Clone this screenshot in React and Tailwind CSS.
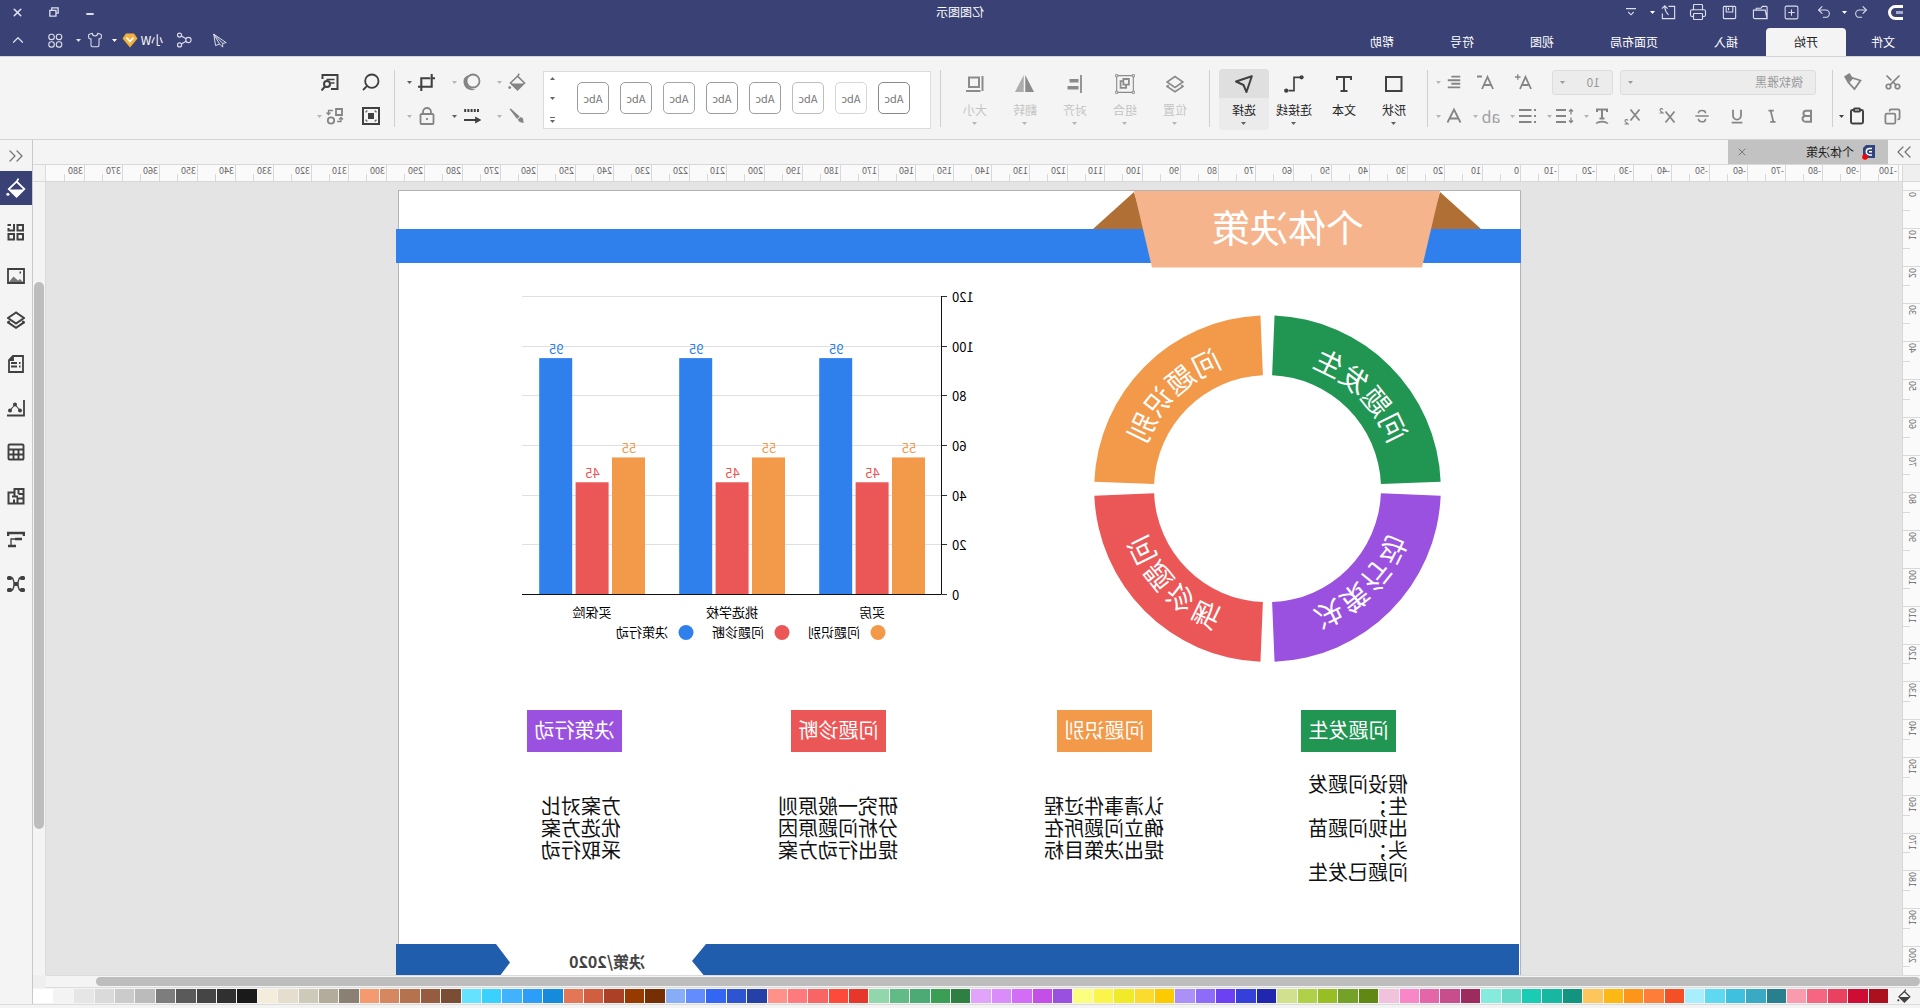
import React from 'react';
import {
  Undo2,
  Redo2,
  SquarePlus,
  Printer,
  Scissors,
  Copy,
  Clipboard,
  Search,
  ChevronUp,
  ChevronsLeft,
  ChevronsRight,
  Shirt,
  X,
  Minus,
} from 'lucide-react';

// canvas pixels per millimetre at 100%
const MM = 3.7795;

const tabs = ['开始', '插入', '页面布局', '视图', '符号', '帮助'];

const palette = [
  '#ac0f1e', '#cd0d33', '#e94260', '#f66681', '#f89cad',
  '#28808f', '#39a9c4', '#3fc0de', '#5fd9f1', '#a8eefe',
  '#f55025', '#fe7d38', '#fd9519', '#feb814', '#fdc65c',
  '#13947f', '#17b7a0', '#19ccb3', '#65dac8', '#84ebdd',
  '#9c2b5e', '#c84d8c', '#e566a8', '#f986c7', '#f1c2dc',
  '#608813', '#76a129', '#98be25', '#b1d04a', '#d1e08d',
  '#1f27af', '#353fda', '#6c40f3', '#8e6bf9', '#ab91f7',
  '#fbca01', '#fbdc2e', '#f1ea29', '#fbf44b', '#fcfe80',
  '#994fe0', '#c34fe8', '#d36df7', '#d98cfa', '#e0a5fb',
  '#2f7f43', '#3a9f54', '#4eaa74', '#62bb86', '#92d7ab',
  '#e7362a', '#fe4a39', '#f96464', '#fe7a7c', '#fe9188',
  '#2541a8', '#2d55d2', '#3367f3', '#638cfe', '#87adf6',
  '#762f02', '#983a00', '#ac4025', '#d15e40', '#e37654',
  '#178bdb', '#2c9df8', '#42b1fe', '#3bd1fe', '#65e3fe',
  '#7a4e35', '#955c42', '#b4724f', '#d58760', '#f5996e',
  '#8a8074', '#b3ab9b', '#cecab9', '#e5decf', '#f4eddc',
  '#1a1a1a', '#303030', '#454545', '#5a5a5a', '#7d7d7d',
  '#bbbbbb', '#cbcbcb', '#dadada', '#e6e6e6', '#f3f3f3', '#ffffff',
];

function Svg({ size = 18, sw = 1.8, children }) {
  return (
    <svg
      width={size}
      height={size}
      viewBox="0 0 18 18"
      fill="none"
      stroke="currentColor"
      strokeWidth={sw}
      className="shrink-0"
      aria-hidden="true"
    >
      {children}
    </svg>
  );
}

function Caret({ className = '' }) {
  return (
    <svg width="5" height="3" viewBox="0 0 5 3" className={`shrink-0 ${className}`} aria-hidden="true">
      <path d="M0 0h5L2.5 3z" fill="currentColor" />
    </svg>
  );
}

const Bucket = ({ size }) => (
  <Svg size={size} sw={1.6}>
    <path d="M8.5 3.2 15.5 10l-7 6.8-7-6.8zM8.5 3.6 6.8.6" />
    <path d="M2 10.4h13l-6.5 6z" fill="currentColor" stroke="none" />
    <circle cx="16.3" cy="14.6" r="1.4" fill="currentColor" stroke="none" />
  </Svg>
);

const Layers = ({ sw }) => (
  <Svg sw={sw}>
    <path d="M9 1.5 17 7l-8 5.5L1 7z" />
    <path d="m2.8 10.2-1.8 1.2 8 5.4 8-5.4-1.8-1.2" />
  </Svg>
);

/* ---------- title bar ---------- */

function BarButton({ label, wide = 'w-[31px]', children }) {
  return (
    <button aria-label={label} className={`${wide} h-6 flex items-center justify-center text-[#dcdeec]`}>
      {children}
    </button>
  );
}

function TitleBar() {
  return (
    <header className="bg-[#3a4174] text-white">
      <div className="h-7 grid grid-cols-[1fr_auto_1fr] items-start">
        <div className="flex items-center h-6">
          <svg width="17" height="17" viewBox="0 0 17 17" className="ml-4 mr-3" aria-hidden="true">
            <path d="M1 2.5h7.5a6 6 0 0 1 0 12H1" fill="none" stroke="#fff" strokeWidth="3" />
            <path d="M1 8.5h7" stroke="#a7abc9" strokeWidth="3" />
          </svg>
          <BarButton label="撤销" wide="w-7"><Undo2 size={16} strokeWidth={1.6} /></BarButton>
          <Caret />
          <BarButton label="恢复" wide="w-[35px]"><Redo2 size={16} strokeWidth={1.6} /></BarButton>
          <BarButton label="新建"><SquarePlus size={17} strokeWidth={1.5} /></BarButton>
          <BarButton label="打开">
            <Svg size={17} sw={1.2}>
              <path d="M2 15.5V3.5a1 1 0 0 1 1-1h4l1.5 2h5v2M2 15.5l2-9h12.5V14a1.5 1.5 0 0 1-1.5 1.5z" />
            </Svg>
          </BarButton>
          <BarButton label="保存">
            <Svg size={17} sw={1.2}>
              <rect x="2.5" y="2.5" width="13" height="13" rx="1" />
              <path d="M5.5 2.5v6h7v-6M10 4v2.5" />
            </Svg>
          </BarButton>
          <BarButton label="打印"><Printer size={18} strokeWidth={1.5} /></BarButton>
          <BarButton label="导出" wide="w-7">
            <Svg size={17} sw={1.2}>
              <path d="M9 2.5H2.5v13h13V10" />
              <path d="M9 11.5c2-2 4-5 4-9M10 5l3-3 3 3" />
            </Svg>
          </BarButton>
          <Caret />
          <BarButton label="更多" wide="w-[38px]">
            <Svg size={10} sw={2}>
              <path d="M0 3h18M4 9l5 5 5-5" />
            </Svg>
          </BarButton>
        </div>
        <h1 className="h-6 leading-6 text-xs">亿图图示</h1>
        <div className="flex justify-end h-6">
          <BarButton label="最小化" wide="w-9"><Minus size={10} strokeWidth={5} className="mt-1" /></BarButton>
          <BarButton label="还原" wide="w-9">
            <Svg size={10} sw={2.4}>
              <path d="M5 11H1.5V1.5H13V5M5.5 6h11v10.5h-11z" />
            </Svg>
          </BarButton>
          <BarButton label="关闭" wide="w-9"><X size={13} strokeWidth={3} /></BarButton>
        </div>
      </div>
      <div className="h-7 flex justify-between items-start">
        <nav className="flex text-xs">
          <button className="w-[74px] h-7">文件</button>
          {tabs.map((tab) => (
            <button
              key={tab}
              className={`px-7 h-7 ${tab === '开始' ? 'bg-[#f4f4f4] text-[#222] rounded-t-sm' : ''}`}
            >
              {tab}
            </button>
          ))}
        </nav>
        <div className="flex items-center h-6">
          <BarButton label="发送" wide="w-9">
            <Svg size={16} sw={1.1}>
              <path d="M16 2.5 2 12l4 .8M16 2.5 6 12.8V17l3.5-3.5M16 2.5 9.5 13.5l4.5 1.8z" />
            </Svg>
          </BarButton>
          <BarButton label="分享" wide="w-9">
            <Svg size={16} sw={1.3}>
              <circle cx="4" cy="9" r="3" />
              <circle cx="14" cy="3.5" r="2.3" />
              <circle cx="14" cy="14.5" r="2.3" />
              <path d="M6.7 7.6 12 4.6M6.7 10.4l5.3 3" />
            </Svg>
          </BarButton>
          <button className="flex items-center text-xs ml-0.5">
            <span className="w-6">小W</span>
            <svg width="16" height="15" viewBox="0 0 16 15" className="ml-0.5 mr-[5px]" aria-hidden="true">
              <path d="M4 .5h8l3.5 5L8 14.5.5 5.5z" fill="#f3b13f" />
              <path d="M4.5 4.5 8 8.5l3.5-4" fill="none" stroke="#fff" strokeWidth="1.8" />
            </svg>
            <Caret />
          </button>
          <button aria-label="皮肤" className="flex items-center ml-[9px] gap-1.5 text-[#dcdeec]">
            <Shirt size={16} strokeWidth={1.6} />
            <Caret />
          </button>
          <BarButton label="应用" wide="w-10">
            <Svg size={15} sw={1.4}>
              <rect x="1.5" y="1.5" width="6.5" height="6.5" rx="2.8" />
              <rect x="10.5" y="1.5" width="6.5" height="6.5" rx="2.8" />
              <rect x="1.5" y="10.5" width="6.5" height="6.5" rx="2.8" />
              <rect x="10.5" y="10.5" width="6.5" height="6.5" rx="2.8" />
            </Svg>
          </BarButton>
          <BarButton label="收起功能区" wide="w-9"><ChevronUp size={18} strokeWidth={1.6} /></BarButton>
        </div>
      </div>
    </header>
  );
}

/* ---------- ribbon ---------- */

function Tool({ label, width = 'w-[35px]', dark, children }) {
  return (
    <button
      aria-label={label}
      className={`${width} h-[34px] flex items-center justify-center ${dark ? 'text-[#404040]' : 'text-[#858585]'}`}
    >
      {children}
    </button>
  );
}

function DropTool({ label, width = 'w-[37px]', gap = 'gap-1', dark, children }) {
  return (
    <button
      aria-label={label}
      className={`${width} ${gap} h-[34px] flex items-center pl-1 ${dark ? 'text-[#404040]' : 'text-[#858585]'}`}
    >
      <span className="w-[18px] flex justify-center">{children}</span>
      <Caret className={dark ? 'text-[#606060]' : 'text-[#b5b5b5]'} />
    </button>
  );
}

function BigTool({ label, disabled, active, caret = true, children }) {
  return (
    <button
      disabled={disabled}
      className={`w-[50px] h-[61px] flex flex-col items-center rounded-sm ${active ? 'bg-[#ebebeb]' : ''} ${
        disabled ? 'text-[#8b8b8b]' : 'text-[#404040]'
      }`}
    >
      <span className={`h-[29px] w-full flex items-center justify-center rounded-t-sm ${active ? 'bg-[#dfdfdf]' : ''}`}>
        {children}
      </span>
      <span className={`h-6 leading-6 text-xs ${disabled ? 'text-[#c4c4c4]' : 'text-[#222]'}`}>{label}</span>
      {caret && <Caret className={disabled ? 'text-[#b5b5b5]' : 'text-[#606060]'} />}
    </button>
  );
}

const Divider = ({ className = '' }) => <div className={`w-px h-[57px] mt-[5px] bg-[#cfcfcf] ${className}`} />;

const styleBorders = [
  'border-[#8a8a8a]', 'border-[#d6d6d6]', 'border-[#bdbdbd]', 'border-[#9c9c9c]',
  'border-[#9c9c9c]', 'border-[#a6a6a6]', 'border-[#9c9c9c]', 'border-[#9c9c9c]',
];

function Ribbon() {
  return (
    <div className="h-[84px] flex items-start bg-[#f4f4f4] border-y border-[#d2d2d6] pt-2">
      <div className="pl-[7px]">
        <div className="flex">
          <Tool label="剪切" width="w-10"><Scissors size={18} strokeWidth={2.3} className="-rotate-90" /></Tool>
          <Tool label="格式刷" width="w-10">
            <Svg>
              <path d="M1.5 7.500 9.500 5l4 4.500L7.500 16z" />
              <path d="M9.500 4.500 12.500 0 18 3.500 14.500 9.500z" fill="currentColor" stroke="none" />
            </Svg>
          </Tool>
        </div>
        <div className="flex">
          <Tool label="复制" width="w-10"><Copy size={17} strokeWidth={2.5} /></Tool>
          <Tool label="粘贴" width="w-10" dark>
            <Clipboard size={18} strokeWidth={2.6} className="mr-1" />
            <Caret />
          </Tool>
        </div>
      </div>
      <Divider />
      <div className="pl-[7px]">
        <div className="flex items-center pl-[9px]">
          <label className="relative w-[196px] text-[#9a9a9a] mr-[7px]">
            <select
              aria-label="字体"
              className="appearance-none block w-full h-[25px] pl-3 text-xs bg-[#ececec] border border-[#dcdcdf] rounded-[3px]"
            >
              <option>微软雅黑</option>
            </select>
            <Caret className="absolute right-2 top-[11px] pointer-events-none" />
          </label>
          <label className="relative w-[61px] text-[#9a9a9a] mr-2.5">
            <select
              aria-label="字号"
              className="appearance-none block w-full h-[25px] pl-3 text-xs bg-[#ececec] border border-[#dcdcdf] rounded-[3px]"
            >
              <option>10</option>
            </select>
            <Caret className="absolute right-2 top-[11px] pointer-events-none" />
          </label>
          <Tool label="增大字号" width="w-9">
            <Svg>
              <path d="M2 16 7.500 4 13 16M4 12h7" />
              <path d="M12.500 4H18M15.200 1.200v5.600" strokeWidth="1.300" />
            </Svg>
          </Tool>
          <Tool label="减小字号" width="w-[39px]">
            <Svg>
              <path d="M2 16 7.500 4 13 16M4 12h7M13 3.500h5" />
            </Svg>
          </Tool>
          <DropTool label="对齐方式">
            <Svg size={16} sw={2.1}>
              <path d="M2 3h10M2 7h14M2 11h10M2 15h14" />
            </Svg>
          </DropTool>
        </div>
        <div className="flex">
          <Tool label="加粗">
            <Svg size={16} sw={2.2}>
              <path d="M4.500 3H10a3 3 0 0 1 0 6H4.500zM4.500 9h6.300a3.200 3.200 0 0 1 0 6.400H4.500z" />
            </Svg>
          </Tool>
          <Tool label="斜体">
            <Svg size={16} sw={2}>
              <path d="M7 3h6M5 15.500h6M10.500 3l-3 12.500" />
            </Svg>
          </Tool>
          <Tool label="下划线">
            <Svg size={16} sw={2}>
              <path d="M4.500 2v6.500a4.500 4.500 0 0 0 9 0V2M3 16.500h12" />
            </Svg>
          </Tool>
          <Tool label="删除线">
            <Svg size={16}>
              <path d="M13 6c0-2-1.500-3.200-4-3.200S5 3.900 5 5.800M1.500 9h15M5 12c0 2.200 1.500 3.500 4 3.500s4-1.300 4-3.300" />
            </Svg>
          </Tool>
          <Tool label="上标">
            <Svg>
              <path d="m1.500 4.500 9 11M10.500 4.500l-9 11" />
              <path d="M13 2.500c1-1.500 3.300-1 3 .6-.2 1.100-2 1.900-3 2.900h3.500" strokeWidth="1.100" />
            </Svg>
          </Tool>
          <Tool label="下标">
            <Svg>
              <path d="m1.500 2.500 9 11M10.500 2.500l-9 11" />
              <path d="M13 13.500c1-1.500 3.300-1 3 .6-.2 1.100-2 1.900-3 2.900h3.500" strokeWidth="1.100" />
            </Svg>
          </Tool>
          <DropTool label="文字方向">
            <Svg sw={2}>
              <path d="M4 5V2.500h10V5M9 2.500v9M6.500 11.500h5" />
              <path d="M3 16.500c3-2.500 9-2.500 12 0" strokeWidth="1.600" />
            </Svg>
          </DropTool>
          <DropTool label="行距">
            <Svg sw={2}>
              <path d="M8 3h10M8 9h10M8 15h10" />
              <path d="M3 2.500v5M1 4.500l2-2 2 2M3 10.500v5M1 13.500l2 2 2-2" strokeWidth="1.300" />
            </Svg>
          </DropTool>
          <DropTool label="项目符号">
            <Svg sw={2}>
              <path d="M5.500 3H18M5.500 9H18M5.500 15H18M1 3h2M1 9h2M1 15h2" />
            </Svg>
          </DropTool>
          <DropTool label="文字底色"><span className="text-base leading-5 text-[#a0a0a0]">ab</span></DropTool>
          <DropTool label="文字颜色">
            <Svg>
              <path d="M2.500 15.500 9 2.500l6.500 13M5 11.500h8" />
            </Svg>
          </DropTool>
        </div>
      </div>
      <Divider className="ml-0.5 mr-2" />
      <div className="flex pt-1">
        <BigTool label="形状">
          <Svg><rect x="1.500" y="2" width="15.500" height="14" strokeWidth="2" /></Svg>
        </BigTool>
        <BigTool label="文本" caret={false}>
          <Svg sw={2}><path d="M2 5V2h14v3M9 2v14.500M5.500 16h7" /></Svg>
        </BigTool>
        <BigTool label="连接线">
          <Svg size={20} sw={1.5}>
            <path d="M2 3h7v12h5" />
            <circle cx="2.200" cy="3" r="1.900" fill="currentColor" stroke="none" />
            <circle cx="16" cy="15" r="1.900" fill="currentColor" stroke="none" />
          </Svg>
        </BigTool>
        <BigTool label="选择" active>
          <Svg sw={2}><path d="M1.200 1.200 17 6.500 9.500 10 6.500 17z" strokeLinejoin="round" /></Svg>
        </BigTool>
      </div>
      <Divider className="mx-[9px]" />
      <div className="flex pt-1">
        <BigTool label="位置" disabled><Layers sw={1.7} /></BigTool>
        <BigTool label="组合" disabled>
          <Svg size={20} sw={1}>
            <path d="M1.500 1.500h15v15h-15z" />
            <path d="M5.500 4.500h5v5h-5zM8 9.500v3h5v-6h-2.500" strokeWidth="1.600" />
            <path d="M.5.5h2v2h-2zM15.500.5h2v2h-2zM.5 15.500h2v2h-2zM15.500 15.500h2v2h-2z" fill="#f4f4f4" strokeWidth=".8" />
          </Svg>
        </BigTool>
        <BigTool label="对齐" disabled>
          <Svg>
            <path d="M3 0v18" />
            <path d="M5.500 4h9v3.500h-9zM5.500 11h11v3.500h-11z" fill="currentColor" stroke="none" />
          </Svg>
        </BigTool>
        <BigTool label="翻转" disabled>
          <Svg size={19}>
            <path d="M8.300 1v16H0z" fill="#8b8b8b" stroke="none" />
            <path d="M9.700 1v16H18z" fill="#adadad" stroke="none" />
          </Svg>
        </BigTool>
        <BigTool label="大小" disabled>
          <Svg sw={2}><path d="M5 2.500h10V12H5zM1.500 1v15M3.500 16H18" /></Svg>
        </BigTool>
      </div>
      <Divider className="mx-[9px]" />
      <div className="mt-1.5 h-[58px] w-[388px] flex items-center justify-between bg-white border border-[#dcdcdc] pl-5 pr-1.5">
        <div className="flex gap-[11px] pb-1">
          {styleBorders.map((border, i) => (
            <button key={i} className={`size-8 rounded-[5px] border text-[11px] text-[#777] bg-white ${border}`}>
              Abc
            </button>
          ))}
        </div>
        <div className="flex flex-col items-center gap-[17px] text-[#666]">
          <button aria-label="上一行"><Caret className="rotate-180 block" /></button>
          <button aria-label="下一行"><Caret className="block" /></button>
          <button aria-label="更多样式" className="border-t border-[#666] pt-0.5"><Caret className="block" /></button>
        </div>
      </div>
      <div className="ml-[13px]">
        <div className="flex">
          <DropTool label="填充" width="w-[45px]" gap="gap-1.5"><Bucket size={18} /></DropTool>
          <DropTool label="阴影" width="w-[45px]" gap="gap-1.5">
            <Svg>
              <circle cx="8" cy="8" r="6.500" />
              <path d="M12 2.500a8 8 0 0 1-7 13.500c4.500 3 12.500 0 12.500-7.500 0-3.500-2.500-6-5.500-6z" fill="currentColor" stroke="none" />
            </Svg>
          </DropTool>
          <DropTool label="裁剪" width="w-[45px]" gap="gap-1.5" dark>
            <Svg size={17} sw={2.2}><path d="M3.500 0v13.500H15M14.500 18V4.500H5M0 4.500h3M15 13.500h3" /></Svg>
          </DropTool>
        </div>
        <div className="flex">
          <DropTool label="线条" width="w-[45px]" gap="gap-1.5">
            <Svg size={16}>
              <path d="M17.500 1 16 .5 6 9.500 9 12.500z" fill="currentColor" stroke="none" />
              <path d="M5.500 10.500 8 13c-1 3-4 4-7 3.500 1.200-1 .8-2 1-3.500.3-1.800 1.600-2.800 3.500-2.500z" fill="currentColor" stroke="none" />
            </Svg>
          </DropTool>
          <DropTool label="线型" width="w-[45px]" gap="gap-1.5" dark>
            <Svg>
              <path d="M2 3.500h15" strokeWidth="3" strokeDasharray="2 1.200" />
              <path d="M17 13H2M5 11l-3.500 2L5 15z" fill="currentColor" />
            </Svg>
          </DropTool>
          <DropTool label="锁定" width="w-[45px]" gap="gap-1.5">
            <Svg>
              <rect x="2.500" y="7" width="13" height="10" rx="1" />
              <path d="M5 7V5a4 4 0 0 1 8 0v2M9 11v2" />
            </Svg>
          </DropTool>
        </div>
      </div>
      <Divider />
      <div>
        <div className="flex">
          <Tool label="查找" width="w-[46px]" dark><Search size={20} strokeWidth={2.2} /></Tool>
          <Tool label="查找替换" width="w-9" dark>
            <Svg sw={2}>
              <path d="M8 16H1.500V2h15v4" />
              <path d="M4.500 6.500h8M4.500 10H8" strokeWidth="1.500" />
              <circle cx="12" cy="11" r="3" />
              <path d="m14 13.500 3.500 4" />
            </Svg>
          </Tool>
        </div>
        <div className="flex">
          <Tool label="适应页面" width="w-[46px]" dark>
            <Svg sw={2}>
              <rect x="1" y="1" width="16" height="16" />
              <path d="M6 6h6v6H6z" fill="currentColor" stroke="none" />
              <path d="M4 5.500V4h1.500M12.500 4H14v1.500M4 12.500V14h1.500M12.500 14H14v-1.500" strokeWidth="1" />
            </Svg>
          </Tool>
          <DropTool label="替换形状" width="w-9">
            <Svg>
              <path d="M2 2h6v6H2z" />
              <circle cx="13" cy="13.500" r="3.200" />
              <path d="M11 3.500h4.500V7M13.500 5.500l2 2 2-2M7 14.500H3V11M1 12.500l2-2 2 2" strokeWidth="1.300" />
            </Svg>
          </DropTool>
        </div>
      </div>
    </div>
  );
}

/* ---------- rulers ---------- */

const hMarks = Array.from({ length: 49 }, (_, i) => i * 10 - 100);
const vMarks = Array.from({ length: 21 }, (_, i) => i * 10);
const span = (i) => Math.round((i + 1) * 10 * MM) - Math.round(i * 10 * MM);

function HorizontalRuler() {
  return (
    <div className="flex-1 min-w-0 flex overflow-hidden bg-[#fafafa] border-l border-[#d8d8d8] pl-[3px] text-[9px] leading-3 text-[#666]">
      {hMarks.map((mark, i) => (
        <div key={mark} className="flex shrink-0 border-l border-[#d8d8d8]" style={{ width: span(i) }}>
          <span className="w-1/2 pl-px">{mark}</span>
          <span className="w-1/2 h-[7px] self-end border-l border-[#d8d8d8]" />
        </div>
      ))}
    </div>
  );
}

function VerticalRuler() {
  return (
    <div className="w-[18px] shrink-0 overflow-hidden bg-[#fafafa] border-r border-[#d8d8d8] pt-2 text-[9px] leading-[9px] text-[#666]">
      {vMarks.map((mark, i) => (
        <div key={mark} className="flex flex-col border-t border-[#d8d8d8]" style={{ height: span(i) }}>
          <span className="h-1/2 pt-px pl-[3px]">
            <span className="block w-[9px] [writing-mode:vertical-rl] rotate-180">{mark}</span>
          </span>
          <span className="h-1/2 w-[7px] self-end border-t border-[#d8d8d8]" />
        </div>
      ))}
    </div>
  );
}

/* ---------- slide ---------- */

const segments = [
  { text: '问题发生', color: '#219653', angle: -45 },
  { text: '问题识别', color: '#f2994a', angle: 45 },
  { text: '问题诊断', color: '#eb5757', angle: 135 },
  { text: '决策行动', color: '#9b51e0', angle: 225 },
];

const polar = (r, deg) => {
  const a = (deg * Math.PI) / 180;
  return `${(r * Math.sin(a)).toFixed(2)} ${(-r * Math.cos(a)).toFixed(2)}`;
};

function Donut() {
  const R = 173.3;
  const r = 113.5;
  const half = 42.67;
  return (
    <g transform="translate(253.5 298.7)">
      {segments.map(({ text, color, angle }) => (
        <g key={text}>
          <path
            fill={color}
            d={`M${polar(R, angle - half)}A${R} ${R} 0 0 1 ${polar(R, angle + half)}L${polar(r, angle + half)}A${r} ${r} 0 0 0 ${polar(r, angle - half)}Z`}
          />
          {[...text].map((ch, i) => (
            <text
              key={i}
              y="-129"
              textAnchor="middle"
              className="text-[28px] fill-white"
              transform={`rotate(${angle + (i - 1.5) * 12.6})`}
            >
              {ch}
            </text>
          ))}
        </g>
      ))}
    </g>
  );
}

const series = [
  { name: '问题识别', color: '#f2994a', value: 55 },
  { name: '问题诊断', color: '#eb5757', value: 45 },
  { name: '决策行动', color: '#2f80ed', value: 95 },
];
const categories = ['买房', '挑选学校', '买保险'];

function BarChart() {
  const base = 404;
  const unit = 2.483;
  return (
    <g>
      {[0, 20, 40, 60, 80, 100, 120].map((v) => {
        const y = Math.round(base - v * unit) + 0.5;
        return (
          <g key={v}>
            {v > 0 && <path d={`M580 ${y}H999`} stroke="#e0e0e0" />}
            <path d={`M574 ${y}h5`} stroke="#333" />
            <text x="569" y={y + 5} textAnchor="end" className="text-[13px] fill-black">{v}</text>
          </g>
        );
      })}
      {categories.map((cat, g) => (
        <g key={cat}>
          {series.map(({ name, color, value }, i) => {
            const x = 596 + g * 140 + i * 36.4;
            return (
              <g key={name} fill={color}>
                <rect x={x} y={base - value * unit} width="33" height={value * unit} />
                <text x={x + 16} y={base - value * unit - 4} textAnchor="middle" className="text-[13px]">{value}</text>
              </g>
            );
          })}
          <text x={649 + g * 140} y="427" textAnchor="middle" className="text-[13px] fill-black">{cat}</text>
        </g>
      ))}
      <path d="M579.5 106V404.5H999" fill="none" stroke="#111" />
      {series.map(({ name, color }, i) => (
        <g key={name}>
          <circle cx={643 + i * 96} cy="442.5" r="7.5" fill={color} />
          <text x={661 + i * 96} y="447" className="text-[13px] fill-black">{name}</text>
        </g>
      ))}
    </g>
  );
}

const steps = [
  {
    title: '问题发生',
    text: '假设问题发\n生；\n出现问题苗\n头；\n问题已发生',
    box: 'left-[125px] bg-[#219653]',
    body: 'left-[113px] top-[583px]',
  },
  {
    title: '问题识别',
    text: '认清事件过程\n确立问题所在\n提出决策目标',
    box: 'left-[369px] bg-[#f2994a]',
    body: 'left-[357px] top-[605px]',
  },
  {
    title: '问题诊断',
    text: '研究一般原则\n分析问题原因\n提出行动方案',
    box: 'left-[635px] bg-[#eb5757]',
    body: 'left-[623px] top-[605px]',
  },
  {
    title: '决策行动',
    text: '方案对比\n优选方案\n采取行动',
    box: 'left-[899px] bg-[#9b51e0]',
    body: 'left-[900px] top-[605px]',
  },
];

function Slide() {
  return (
    <article className="relative ml-[381px] mt-2 w-[1123px] h-[794px] shrink-0">
      <svg width="1123" height="794" className="block overflow-visible" aria-label="个体决策">
        <rect x=".5" y=".5" width="1122" height="793" fill="#fff" stroke="#b3b3b3" />
        <path d="M0 39h1125v34H0z" fill="#2f80ed" />
        <path d="M81 2 40 39h52zM387 2l41 37h-52z" fill="#b07035" />
        <path d="M81 1h306l-18 76.5H99z" fill="#f6b48c" />
        <text x="233" y="52" textAnchor="middle" className="text-[38px] fill-white">个体决策</text>
        <Donut />
        <BarChart />
        <path d="M2 754h813l14 17-14 17H2zM1125 754h-100l-14 18.5 14 18.5h100z" fill="#205dad" />
        <text x="914" y="778" textAnchor="middle" className="text-base font-bold fill-[#444]">决策/2020</text>
      </svg>
      {steps.map(({ title, text, box, body }) => (
        <section key={title}>
          <h2 className={`absolute top-[520px] w-[95px] h-[42px] leading-10 text-center text-[20px] text-white ${box}`}>
            {title}
          </h2>
          <p className={`absolute text-[20px] leading-[22px] text-[#111] whitespace-pre ${body}`}>{text}</p>
        </section>
      ))}
    </article>
  );
}

/* ---------- side panel ---------- */

const panelTools = [
  ['填充', <Bucket size={20} />],
  ['符号库', (
    <Svg sw={2}>
      <path d="M2 2h5.5v5.5H2zM2 11h5.5v5.5H2zM11 11h5.5v5.5H11z" />
      <path d="M11 1v6.5h5.5V5M14 2h3.5" />
    </Svg>
  )],
  ['图片', (
    <Svg>
      <path d="M1 2h16v14H1z" />
      <path d="m2 15 3-3 2 1.5 4.5-4L16 15z" fill="#777" stroke="none" />
      <path d="M4 5.5h1.5" />
    </Svg>
  )],
  ['图层', <Layers sw={2} />],
  ['页面', (
    <Svg>
      <path d="M2 1h10l4 4v12H2z" />
      <path d="M8 8h6M8 11.5h6M4.5 8H6M4.500 11.5H6" />
      <path d="M12 1v4h4" fill="currentColor" />
    </Svg>
  )],
  ['图表', (
    <Svg>
      <path d="M1 1v15.5h17" />
      <path d="m5 11.5 5-6 5 6" strokeWidth="1.1" />
      <g fill="currentColor" stroke="none">
        <circle cx="5" cy="11.5" r="2" />
        <circle cx="10" cy="5.5" r="2" />
        <circle cx="15" cy="11.5" r="2" />
      </g>
    </Svg>
  )],
  ['表格', (
    <Svg sw={1.9}>
      <rect x="1.5" y="1.5" width="15" height="15" rx="1" />
      <path d="M1.5 6.5h15M1.5 11.5h15M6.5 6.5v10M11.5 6.5v10" />
    </Svg>
  )],
  ['平面图', (
    <Svg sw={2}>
      <path d="M1.5 2h9v3.5h6v11h-15zM1.5 7h5M6.5 2v5M10.5 5v4M1.5 11.5h6v5M11 12.5v4M7 9.5h6" />
    </Svg>
  )],
  ['甘特图', (
    <Svg sw={2.6}>
      <path d="M0 2h18M1 1v4M17 1v4" />
      <path d="M3 8h7M9 15h8" />
      <path d="M10 8h4v6" strokeWidth="1.3" />
    </Svg>
  )],
  ['思维导图', (
    <Svg sw={1.4}>
      <path d="M3 3h2.500c2.500 6 2.500 6 0 12H3M15 3h-2.500c-2.500 6-2.500 6 0 12H15M6.500 9h5" />
      <g fill="currentColor" stroke="none">
        <rect x="0" y="1" width="5" height="4" rx="1.500" />
        <rect x="13" y="1" width="5" height="4" rx="1.500" />
        <rect x="0" y="13" width="5" height="4" rx="1.500" />
        <rect x="13" y="13" width="5" height="4" rx="1.500" />
        <rect x="6.500" y="7" width="5" height="4" rx="1" />
      </g>
    </Svg>
  )],
];

function SidePanel() {
  return (
    <aside className="w-[33px] shrink-0 bg-[#f4f4f4] border-l border-[#c8c8c8] flex flex-col gap-2.5 text-[#404040]">
      <button aria-label="收起面板" className="h-[31px] -mb-2.5 flex items-center justify-center text-[#777]">
        <ChevronsLeft size={24} strokeWidth={1.3} />
      </button>
      {panelTools.map(([label, icon], i) => (
        <button
          key={label}
          aria-label={label}
          className={`h-[34px] flex items-center justify-center ${i === 0 ? 'bg-[#3a4174] text-white' : ''}`}
        >
          {icon}
        </button>
      ))}
    </aside>
  );
}

export default function App() {
  return (
    // whole window is flipped left to right
    <div className="h-screen min-w-[1640px] flex flex-col overflow-hidden bg-[#f4f4f4] -scale-x-100 font-['Noto_Sans_CJK_SC',sans-serif]">
      <TitleBar />
      <Ribbon />
      <div className="flex-1 min-h-0 flex">
        <main className="flex-1 min-w-0 flex flex-col">
          <div className="h-6 shrink-0 flex items-stretch text-xs text-[#222]">
            <button aria-label="展开符号库" className="w-8 flex items-center justify-center text-[#777]">
              <ChevronsRight size={24} strokeWidth={1.3} />
            </button>
            <div className="w-40 flex items-center bg-[#c2c2c2] pl-3 pr-2">
              <svg width="14" height="16" viewBox="0 0 14 16" className="mr-2" aria-hidden="true">
                <path d="M1 1h9l3 3v10H1z" fill="#2f4380" />
                <path d="M4 4.5h2.5a3.2 3.2 0 0 1 0 6.4H4M4 7.7h3" fill="none" stroke="#fff" strokeWidth="1.5" />
                <circle cx="11" cy="13" r="2.8" fill="#f00" />
              </svg>
              <span className="flex-1">个体决策</span>
              <button aria-label="关闭标签" className="text-[#777]"><X size={12} strokeWidth={2} /></button>
            </div>
          </div>
          <div className="h-[18px] shrink-0 flex border-y border-[#d8d8d8]">
            <div className="w-[17px] bg-[#efefef]" />
            <HorizontalRuler />
            <div className="w-[13px] bg-[#f4f4f4] border-l border-[#dadada]" />
          </div>
          <div className="flex-1 min-h-0 flex">
            <VerticalRuler />
            <div className="flex-1 min-w-0 overflow-hidden bg-[#e4e4e4]">
              <Slide />
            </div>
            <div className="w-[13px] shrink-0 border-l border-[#dadada] px-px flex flex-col">
              <div className="basis-[100px] shrink-0" />
              <div className="h-[69%] rounded-full bg-[#bdbdbd]" />
            </div>
          </div>
          <div className="h-[13px] shrink-0 flex">
            <div className="flex-1 flex border-y border-[#dcdcdc] py-px">
              <div className="flex-1 rounded-full bg-[#bdbdbd]" />
              <div className="w-[50px]" />
            </div>
            <div className="w-[13px] bg-[#efefef]" />
          </div>
          <div className="h-4 shrink-0 flex items-center">
            <span className="w-8 flex justify-center text-[#404040]"><Bucket size={14} /></span>
            <div className="flex-1 flex gap-px h-[14px]">
              {palette.map((color) => (
                <button key={color} aria-label={color} className="flex-1" style={{ backgroundColor: color }} />
              ))}
            </div>
          </div>
        </main>
        <SidePanel />
      </div>
      <footer className="h-1 shrink-0 border-t border-[#dcdcdc]" />
    </div>
  );
}
